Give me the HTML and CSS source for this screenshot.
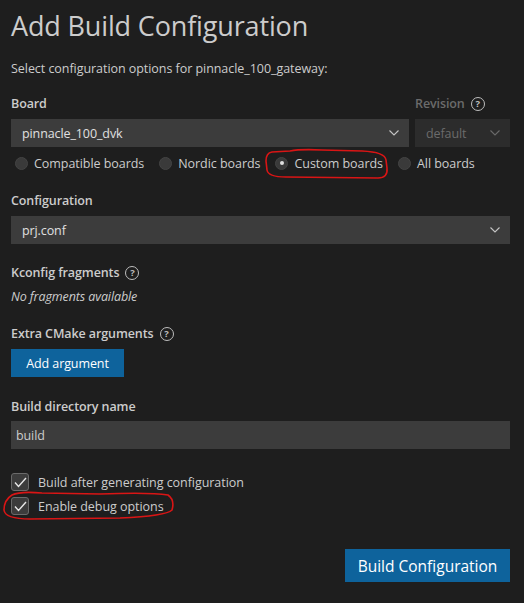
FILE: index.html
```html
<!DOCTYPE html>
<html>
<head>
<meta charset="utf-8">
<link rel="stylesheet" href="styles.css">
</head>
<body>
<div class="page">
  <h1 class="title">Add Build Configuration</h1>
  <p class="subtitle">Select configuration options for pinnacle_100_gateway:</p>

  <div class="board-row">
    <div class="field grow">
      <div class="label">Board</div>
      <div class="select">
        <span>pinnacle_100_dvk</span>
        <svg class="chev" width="12" height="8" viewBox="0 0 12 8"><polyline points="1.5,1.5 6,6 10.5,1.5" fill="none" stroke="#c5c5c5" stroke-width="1.1"/></svg>
      </div>
    </div>
    <div class="field rev">
      <div class="label dim">Revision <span class="help">?</span></div>
      <div class="select disabled">
        <span>default</span>
        <svg class="chev" width="12" height="8" viewBox="0 0 12 8"><polyline points="1.5,1.5 6,6 10.5,1.5" fill="none" stroke="#6a6a6a" stroke-width="1.1"/></svg>
      </div>
    </div>
  </div>

  <div class="radios">
    <label class="radio"><span class="dot"></span>Compatible boards</label>
    <label class="radio"><span class="dot"></span>Nordic boards</label>
    <label class="radio"><span class="dot on"></span>Custom boards</label>
    <label class="radio"><span class="dot"></span>All boards</label>
  </div>

  <div class="field sec">
    <div class="label">Configuration</div>
    <div class="select">
      <span>prj.conf</span>
      <svg class="chev" width="12" height="8" viewBox="0 0 12 8"><polyline points="1.5,1.5 6,6 10.5,1.5" fill="none" stroke="#c5c5c5" stroke-width="1.1"/></svg>
    </div>
  </div>

  <div class="field sec2">
    <div class="label">Kconfig fragments <span class="help">?</span></div>
    <div class="note">No fragments available</div>
  </div>

  <div class="field sec3">
    <div class="label">Extra CMake arguments <span class="help">?</span></div>
    <button class="btn small">Add argument</button>
  </div>

  <div class="field sec4">
    <div class="label">Build directory name</div>
    <div class="input">build</div>
  </div>

  <div class="checks">
    <label class="check"><span class="box"><svg width="13" height="11" viewBox="0 0 13 11"><polyline points="1,5.5 4.5,9.5 12,1" fill="none" stroke="#e8e8e8" stroke-width="1.4"/></svg></span>Build after generating configuration</label>
    <label class="check"><span class="box"><svg width="13" height="11" viewBox="0 0 13 11"><polyline points="1,5.5 4.5,9.5 12,1" fill="none" stroke="#e8e8e8" stroke-width="1.4"/></svg></span>Enable debug options</label>
  </div>

  <div class="actions">
    <button class="btn big">Build Configuration</button>
  </div>

  <svg class="marks" width="524" height="603" viewBox="0 0 524 603">
    <path d="M272 152 Q266 153 266 161 L267 170 Q268 177 286 177 L378 178 Q388 178 387 168 L386 160 Q385 152 362 151 L322 150 Q300 149 290 151 Z" fill="none" stroke="#d91515" stroke-width="1.6"/>
    <path d="M42 493 Q20 491 12 495 Q4 500 4 510 Q5 519 30 519 L120 518 Q166 516 172 510 Q175 500 168 495 Q150 492 100 494 Z" fill="none" stroke="#d91515" stroke-width="1.6"/>
  </svg>
</div>
</body>
</html>
```
FILE: styles.css
```css
* { box-sizing: border-box; }
html, body { margin: 0; padding: 0; background: #1e1e1e; }
body {
  font-family: "Open Sans", "Noto Sans", sans-serif;
  color: #cccccc;
  font-size: 13px;
}
.page {
  position: relative;
  width: 524px;
  height: 603px;
  padding: 8px 14px 0 11px;
  overflow: hidden;
}
.title {
  margin: 0;
  font-size: 27px;
  font-weight: 400;
  line-height: 36px;
  color: #cccccc;
  letter-spacing: -0.15px;
}
.subtitle {
  margin: 16px 0 0 0;
  line-height: 18px;
  font-size: 12.5px;
  letter-spacing: -0.05px;
}
.board-row {
  display: flex;
  gap: 6px;
  margin-top: 17px;
}
.grow { flex: 1; }
.rev { width: 95px; }
.field { display: flex; flex-direction: column; }
.label {
  font-weight: 600;
  line-height: 18px;
  font-size: 12.5px;
  letter-spacing: -0.1px;
  margin-bottom: 6px;
  display: flex;
  align-items: center;
  gap: 6px;
}
.label.dim { color: #6b6b6b; }
.help {
  display: inline-flex;
  width: 14px;
  height: 14px;
  border: 1.3px solid currentColor;
  border-radius: 50%;
  font-size: 9.5px;
  font-weight: 700;
  align-items: center;
  justify-content: center;
  line-height: 1;
  color: #bdbdbd;
}
.label.dim .help { color: #bdbdbd; }
.select {
  height: 28px;
  background: #3c3c3c;
  display: flex;
  align-items: center;
  justify-content: space-between;
  padding: 0 9px 0 11px;
  font-size: 12.5px;
  color: #e0e0e0;
  letter-spacing: -0.1px;
}
.select.disabled { background: #2c2c2c; color: #6b6b6b; padding-left: 11px; }
.radios {
  display: flex;
  height: 24px;
  align-items: center;
  margin-top: 4px;
  padding-left: 4px;
}
.radio {
  display: flex;
  align-items: center;
  font-size: 12.5px;
  letter-spacing: -0.05px;
  margin-right: 15px;
}
.dot {
  width: 13px;
  height: 13px;
  border-radius: 50%;
  background: #3a3a3a;
  border: 1px solid #444;
  margin-right: 6px;
  position: relative;
}
.dot.on::after {
  content: "";
  position: absolute;
  left: 3.5px; top: 3.5px;
  width: 4px; height: 4px;
  border-radius: 50%;
  background: #e0e0e0;
}
.sec { margin-top: 17px; }
.sec2 { margin-top: 20px; }
.note {
  font-style: italic;
  line-height: 18px;
  font-size: 12.5px;
  letter-spacing: -0.1px;
}
.sec3 { margin-top: 19px; }
.btn {
  border: none;
  background: #0e639c;
  color: #ffffff;
  font-family: inherit;
  cursor: pointer;
}
.btn.small {
  align-self: flex-start;
  height: 28px;
  width: 113px;
  font-size: 12.5px;
  letter-spacing: -0.1px;
  padding: 0;
}
.sec4 { margin-top: 21px; }
.sec4 .label { margin-bottom: 5px; }
.input {
  height: 28px;
  background: #3c3c3c;
  display: flex;
  align-items: center;
  padding-left: 5px;
  font-size: 12.5px;
  letter-spacing: -0.1px;
  color: #cccccc;
}
.checks {
  margin-top: 24px;
  display: flex;
  flex-direction: column;
  gap: 6px;
}
.check {
  display: flex;
  align-items: center;
  height: 18px;
  font-size: 12.5px;
  letter-spacing: -0.05px;
}
.box {
  width: 18px;
  height: 18px;
  border-radius: 3px;
  background: #3c3c3c;
  border: 1px solid #6a6a6a;
  display: flex;
  align-items: center;
  justify-content: center;
  margin-right: 9px;
}
.actions {
  margin-top: 34px;
  display: flex;
  justify-content: flex-end;
}
.btn.big {
  height: 33px;
  width: 165px;
  font-size: 15.5px;
  letter-spacing: 0;
  padding: 0;
}
.marks {
  position: absolute;
  left: 0;
  top: 0;
  pointer-events: none;
}
```
